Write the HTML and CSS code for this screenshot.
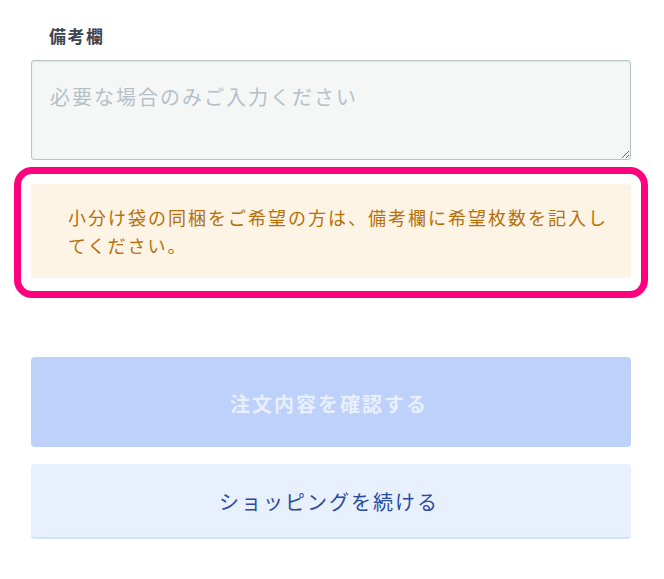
FILE: index.html
```html
<!DOCTYPE html>
<html lang="ja">
<head>
<meta charset="utf-8">
<link rel="stylesheet" href="styles.css">
</head>
<body>
<div class="form">
  <label class="field-label" for="note">備考欄</label>
  <textarea id="note" class="note-input" placeholder="必要な場合のみご入力ください"></textarea>
  <div class="notice-frame">
    <div class="notice">小分け袋の同梱をご希望の方は、備考欄に希望枚数を記入してください。</div>
  </div>
  <div class="actions">
    <button class="btn btn-primary" type="button" disabled>注文内容を確認する</button>
    <button class="btn btn-secondary" type="button">ショッピングを続ける</button>
  </div>
</div>
</body>
</html>
```
FILE: styles.css
```css
html, body {
  margin: 0;
  padding: 0;
  background: #ffffff;
}
body {
  font-family: "Noto Sans CJK JP", "Noto Sans", sans-serif;
}
.form {
  width: 600px;
  margin-left: 31px;
  padding-top: 24px;
  display: flex;
  flex-direction: column;
}
.field-label {
  display: block;
  margin-left: 18px;
  font-size: 17px;
  line-height: 24px;
  font-weight: 700;
  letter-spacing: 1.5px;
  color: #3b4550;
  margin-bottom: 12px;
}
.note-input {
  box-sizing: border-box;
  width: 600px;
  height: 100px;
  margin: 0;
  padding: 21px 18px;
  border: 1px solid #b9c3cb;
  border-radius: 3px;
  background: #f5f7f7;
  box-shadow: inset 0 1px 2px rgba(0, 0, 0, 0.08);
  font-family: "Noto Sans CJK JP", sans-serif;
  font-size: 20px;
  line-height: 30px;
  letter-spacing: 2px;
  color: #333;
  resize: vertical;
  display: block;
}
.note-input::placeholder {
  color: #b5bfc7;
}
.notice-frame {
  margin: 7px -17px 0;
  border: 7px solid #ff007f;
  border-radius: 18px;
  padding: 10px 10px 13px 10px;
}
.notice {
  background: #fdf4e5;
  padding: 19px 20px 19px 37px;
  font-size: 18px;
  line-height: 28px;
  letter-spacing: 2px;
  color: #b5700c;
}
.actions {
  margin-top: 59px;
  display: flex;
  flex-direction: column;
  gap: 17px;
}
.btn {
  display: block;
  width: 600px;
  margin: 0;
  border: none;
  border-radius: 4px;
  font-family: "Noto Sans CJK JP", sans-serif;
  font-size: 20px;
  letter-spacing: 2px;
  padding-left: 2px;
  cursor: pointer;
}
.btn-primary {
  height: 90px;
  padding-top: 4px;
  background: #bed1fa;
  color: #e9f0fd;
  font-weight: 700;
}
.btn-secondary {
  height: 75px;
  background: #e8f0fd;
  border-bottom: 2px solid #d2e0fb;
  color: #2a4b9b;
  padding-top: 2px;
}
```
